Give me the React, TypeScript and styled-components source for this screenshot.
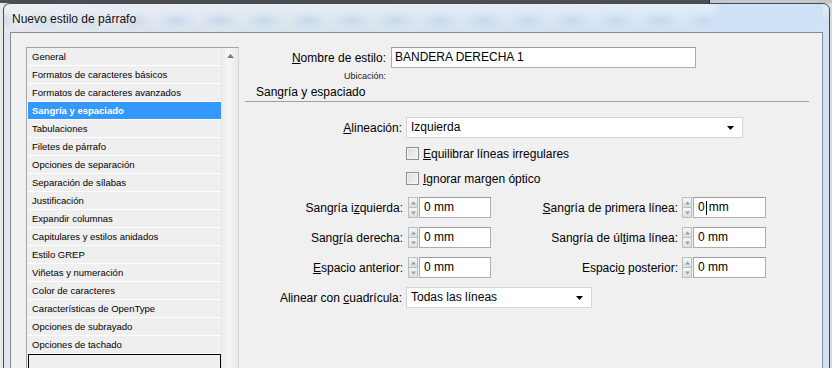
import React from 'react';
import styled, { createGlobalStyle } from 'styled-components';

const GlobalStyle = createGlobalStyle`
  html, body { margin: 0; padding: 0; background: #dcdcdc; }
  body { font-family: "Liberation Sans", Arial, sans-serif; }
`;

const UI = '"Liberation Sans", Arial, sans-serif';

const Desktop = styled.div`
  width: 832px;
  height: 368px;
  overflow: hidden;
  padding-top: 3px;
  box-sizing: border-box;
  background:
    linear-gradient(to right, #4e4e4e 0 709px, #2c2c2c 709px 710px, #c6c6c6 710px) top / 100% 3px no-repeat,
    linear-gradient(to right, #e8e8e8 0 3px, #dadada 3px) ;
`;

const Window = styled.div`
  margin-left: 3px;
  width: 827px;
  height: 400px;
  box-sizing: border-box;
  border: 1px solid #3f4b58;
  border-radius: 7px 7px 0 0;
  padding: 0 6px;
  display: flex;
  flex-direction: column;
  background:
    linear-gradient(to bottom, rgba(255, 255, 255, 0.4), rgba(255, 255, 255, 0) 28px),
    radial-gradient(ellipse 20px 9px at 22px 50%, #bcd2ea, rgba(188, 210, 234, 0)) 150px 5px / 44px 22px repeat-x,
    linear-gradient(to right, #e3e7ec 0, #dae3ec 140px, #d3e1f0 480px, #cfe1f5 720px, #cfe1f5 100%);
`;

const TitleBar = styled.div`
  flex-shrink: 0;
  height: 28px;
  display: flex;
  align-items: center;
  padding-left: 2px;
  background: linear-gradient(to right, transparent 0 700px, #cfe1f5 712px);
`;

const Title = styled.span`
  font: 12px ${UI};
  color: #111;
  text-shadow: 0 0 6px rgba(255, 255, 255, 0.9);
  margin-top: 2px;
`;

const Client = styled.div`
  flex: 1;
  border: 1px solid #7f8fa1;
  background: #f0f0f0;
  padding: 14px 0 0 15px;
  display: flex;
  align-items: flex-start;
`;

const ListBox = styled.div`
  width: 213px;
  height: 340px;
  box-sizing: border-box;
  border: 1px solid #a3a3a3;
  border-right-color: #d6d6d6;
  background: #f4f4f4;
  display: flex;
`;

const ListItems = styled.div`
  width: 195px;
  padding-left: 1px;
`;

const ListItem = styled.div<{ $selected?: boolean }>`
  height: 17px;
  border-bottom: 1px solid #ffffff;
  padding-left: 4px;
  font: ${p => (p.$selected ? 'bold ' : '')}9.5px/17px ${UI};
  color: ${p => (p.$selected ? '#ffffff' : '#000000')};
  background: ${p => (p.$selected ? '#3399ff' : '#efefef')};
  white-space: nowrap;
`;

const FocusRow = styled.div`
  height: 30px;
  border: 1px solid #000;
  background: #efefef;
`;

const ScrollBar = styled.div`
  width: 16px;
  border-left: 1px solid #e6e6e6;
  background: linear-gradient(to right, #ececec, #f6f6f6 40%, #eaeaea);
  display: flex;
  justify-content: center;
  padding-top: 6px;
`;

const Panel = styled.div`
  margin-left: 6px;
  width: 564px;
  display: flex;
  flex-direction: column;
  font: 12px ${UI};
  color: #000;
`;

const Row = styled.div<{ $top?: number; $h?: number }>`
  display: flex;
  align-items: center;
  margin-top: ${p => p.$top ?? 0}px;
  height: ${p => p.$h ?? 21}px;
`;

const Label = styled.label<{ $w: number; $gap?: number }>`
  width: ${p => p.$w}px;
  margin-right: ${p => p.$gap ?? 4}px;
  text-align: right;
  white-space: nowrap;
  flex-shrink: 0;
`;

const SmallLabel = styled(Label)`
  font-size: 9px;
  color: #222;
`;

const Key = styled.span`
  text-decoration: underline;
  text-underline-offset: 1px;
`;

const TextBox = styled.div<{ $w: number }>`
  width: ${p => p.$w}px;
  height: 21px;
  box-sizing: border-box;
  border: 1px solid #acacac;
  border-top-color: #9c9c9c;
  background: #fff;
  padding-left: 3px;
  line-height: 19px;
  white-space: nowrap;
  display: flex;
  align-items: center;
`;

const Select = styled(TextBox)`
  border-color: #d4d4d4;
  padding: 0 8px 0 4px;
  justify-content: space-between;
`;

const Caret = styled.span`
  display: inline-block;
  width: 1px;
  height: 14px;
  background: #000;
  margin: 0 2px 0 1px;
`;

const Heading = styled.div`
  margin-top: 2px;
  height: 16px;
  line-height: 16px;
  padding: 0 0 1px 11px;
  border-bottom: 1px solid #a0a0a0;
`;

const CheckRow = styled(Row)`
  padding-left: 161px;
`;

const CheckBox = styled.span`
  width: 13px;
  height: 13px;
  box-sizing: border-box;
  border: 1px solid #8f8f8f;
  background: linear-gradient(135deg, #dcdcdc, #f6f6f6);
  box-shadow: inset 0 0 0 1px #f4f4f4;
  margin-right: 4px;
`;

const Spinner = styled.div`
  width: 10px;
  height: 21px;
  margin-right: 1px;
  display: flex;
  flex-direction: column;
`;

const SpinBtn = styled.div`
  flex: 1;
  box-sizing: border-box;
  border: 1px solid #b9bec3;
  background: linear-gradient(to bottom, #f6f6f6, #dedede);
  display: flex;
  align-items: center;
  justify-content: center;
  & + & { border-top: none; }
`;

const Arrow = ({ up, color = '#000', w = 7 }: { up?: boolean; color?: string; w?: number }) => (
  <svg width={w} height={4} viewBox="0 0 7 4">
    <path d={up ? 'M0 4 L3.5 0 L7 4 Z' : 'M0 0 L7 0 L3.5 4 Z'} fill={color} />
  </svg>
);

const SpinField = ({
  label,
  labelWidth,
  gap,
  value,
  inputWidth,
}: {
  label: React.ReactNode;
  labelWidth: number;
  gap: number;
  value: React.ReactNode;
  inputWidth: number;
}) => (
  <>
    <Label $w={labelWidth} $gap={gap}>{label}</Label>
    <Spinner>
      <SpinBtn><Arrow up color="#8aa0b8" w={5} /></SpinBtn>
      <SpinBtn><Arrow color="#8aa0b8" w={5} /></SpinBtn>
    </Spinner>
    <TextBox $w={inputWidth} style={{ paddingLeft: 4 }}>{value}</TextBox>
  </>
);

const items = [
  'General',
  'Formatos de caracteres básicos',
  'Formatos de caracteres avanzados',
  'Sangría y espaciado',
  'Tabulaciones',
  'Filetes de párrafo',
  'Opciones de separación',
  'Separación de sílabas',
  'Justificación',
  'Expandir columnas',
  'Capitulares y estilos anidados',
  'Estilo GREP',
  'Viñetas y numeración',
  'Color de caracteres',
  'Características de OpenType',
  'Opciones de subrayado',
  'Opciones de tachado',
];

export default function App() {
  return (
    <>
      <GlobalStyle />
      <Desktop>
        <Window>
          <TitleBar>
            <Title>Nuevo estilo de párrafo</Title>
          </TitleBar>
          <Client>
            <ListBox>
              <ListItems>
                {items.map(it => (
                  <ListItem key={it} $selected={it === 'Sangría y espaciado'}>{it}</ListItem>
                ))}
                <FocusRow />
              </ListItems>
              <ScrollBar>
                <Arrow up color="#7a7a7a" />
              </ScrollBar>
            </ListBox>

            <Panel>
              <Row>
                <Label $w={141} $gap={5}><Key>N</Key>ombre de estilo:</Label>
                <TextBox $w={305}>BANDERA DERECHA 1</TextBox>
              </Row>
              <Row $top={2} $h={12}>
                <SmallLabel $w={141}>Ubicación:</SmallLabel>
              </Row>
              <Heading>Sangría y espaciado</Heading>

              <Row $top={15}>
                <Label $w={157}><Key>A</Key>lineación:</Label>
                <Select $w={337}>
                  <span>Izquierda</span>
                  <Arrow />
                </Select>
              </Row>
              <CheckRow $top={3} $h={25}>
                <CheckBox />
                <span><Key>E</Key>quilibrar líneas irregulares</span>
              </CheckRow>
              <CheckRow $h={25}>
                <CheckBox />
                <span><Key>I</Key>gnorar margen óptico</span>
              </CheckRow>

              <Row $top={6}>
                <SpinField
                  label={<>Sangría i<Key>z</Key>quierda:</>}
                  labelWidth={158} gap={5} inputWidth={72} value="0 mm"
                />
                <SpinField
                  label={<><Key>S</Key>angría de primera línea:</>}
                  labelWidth={187} gap={4} inputWidth={73}
                  value={<>0<Caret />mm</>}
                />
              </Row>
              <Row $top={9}>
                <SpinField
                  label={<>Sang<Key>r</Key>ía derecha:</>}
                  labelWidth={158} gap={5} inputWidth={72} value="0 mm"
                />
                <SpinField
                  label={<>Sangría de úl<Key>t</Key>ima línea:</>}
                  labelWidth={187} gap={4} inputWidth={73} value="0 mm"
                />
              </Row>
              <Row $top={9}>
                <SpinField
                  label={<><Key>E</Key>spacio anterior:</>}
                  labelWidth={158} gap={5} inputWidth={72} value="0 mm"
                />
                <SpinField
                  label={<>Espaci<Key>o</Key> posterior:</>}
                  labelWidth={187} gap={4} inputWidth={73} value="0 mm"
                />
              </Row>

              <Row $top={9}>
                <Label $w={157}>Alinear con <Key>c</Key>uadrícula:</Label>
                <Select $w={186}>
                  <span>Todas las líneas</span>
                  <Arrow />
                </Select>
              </Row>
            </Panel>
          </Client>
        </Window>
      </Desktop>
    </>
  );
}
